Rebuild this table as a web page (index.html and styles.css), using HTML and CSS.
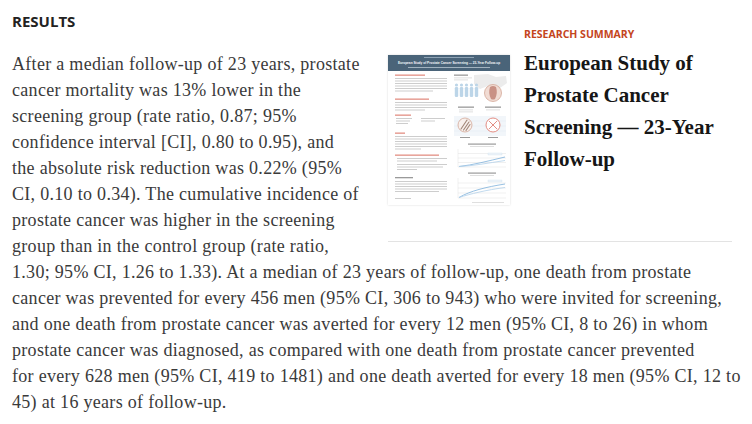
FILE: index.html
```html
<!DOCTYPE html>
<html lang="en">
<head>
<meta charset="utf-8">
<title>Results</title>
<link rel="stylesheet" href="styles.css">
</head>
<body>
<div class="page">
  <aside class="summary">
    <div class="thumb">
      <svg viewBox="0 0 122 150" width="122" height="150" aria-hidden="true">
        <rect width="122" height="150" fill="#fff"/>
        <rect x="0" y="0" width="122" height="16" fill="#4a6479"/>
        <rect x="36" y="2.2" width="50" height="0.8" fill="#9fb3c3"/>
        <text x="61" y="9" font-size="3.2" fill="#f4f7fa" text-anchor="middle" font-family="Liberation Sans" font-weight="700">European Study of Prostate Cancer Screening — 23-Year Follow-up</text>
        <rect x="20" y="12" width="82" height="0.8" fill="#b8c7d3"/>
        <g fill="#e38f84">
          <rect x="7" y="19.5" width="30" height="1.3"/>
          <rect x="7" y="43.5" width="34" height="1.3"/>
          <rect x="7" y="59.5" width="16" height="1.3"/>
          <rect x="7" y="77.5" width="10" height="1.3"/>
          <rect x="7" y="99.5" width="44" height="1.3"/>
        </g>
        <g fill="#cdcdcd">
          <rect x="7" y="23" width="52" height="1"/>
          <rect x="7" y="25.5" width="52" height="1"/>
          <rect x="7" y="28" width="52" height="1"/>
          <rect x="7" y="30.5" width="52" height="1"/>
          <rect x="7" y="33" width="52" height="1"/>
          <rect x="7" y="35.5" width="38" height="1"/>
          <rect x="7" y="47" width="52" height="1"/>
          <rect x="7" y="49.5" width="52" height="1"/>
          <rect x="7" y="52" width="52" height="1"/>
          <rect x="7" y="54.5" width="30" height="1"/>
          <rect x="8" y="63" width="16" height="1"/>
          <rect x="8" y="65.5" width="14" height="1"/>
          <rect x="8" y="68" width="12" height="1"/>
          <rect x="33" y="63" width="24" height="1"/>
          <rect x="33" y="65.5" width="14" height="1"/>
          <rect x="7" y="81" width="52" height="1"/>
          <rect x="7" y="83.5" width="52" height="1"/>
          <rect x="7" y="86" width="52" height="1"/>
          <rect x="7" y="88.5" width="52" height="1"/>
          <rect x="7" y="91" width="52" height="1"/>
          <rect x="7" y="93.5" width="26" height="1"/>
          <rect x="9" y="103" width="50" height="1"/>
          <rect x="9" y="105.5" width="40" height="1"/>
          <rect x="9" y="109" width="50" height="1"/>
          <rect x="9" y="111.5" width="46" height="1"/>
          <rect x="9" y="114" width="20" height="1"/>
          <rect x="7" y="126" width="52" height="1"/>
          <rect x="7" y="128.5" width="52" height="1"/>
          <rect x="7" y="131" width="52" height="1"/>
          <rect x="7" y="133.5" width="52" height="1"/>
          <rect x="7" y="136" width="44" height="1"/>
          <rect x="7" y="143" width="16" height="1"/>
        </g>
        <rect x="7" y="122" width="18" height="1.3" fill="#9a9a9a"/>
        <g fill="#9a9a9a">
          <rect x="66" y="19.5" width="14" height="1.3"/>
          <rect x="70" y="51.5" width="16" height="1.3"/>
          <rect x="97" y="51.5" width="16" height="1.3"/>
          <rect x="72" y="82" width="10" height="1"/>
          <rect x="100" y="82" width="10" height="1"/>
          <rect x="80" y="88.5" width="28" height="1.2"/>
          <rect x="80" y="117.5" width="28" height="1.2"/>
        </g>
        <g fill="#d8d8d8">
          <rect x="66" y="22.5" width="18" height="0.8"/>
          <rect x="66" y="24.5" width="14" height="0.8"/>
          <rect x="71" y="54.5" width="14" height="0.8"/>
          <rect x="71" y="56.5" width="14" height="0.8"/>
          <rect x="98" y="54.5" width="14" height="0.8"/>
          <rect x="82" y="91" width="24" height="0.8"/>
          <rect x="82" y="120" width="24" height="0.8"/>
          <rect x="84" y="147" width="32" height="0.8"/>
        </g>
        <path d="M86 20 L100 19 L108 22 L118 21 L119 28 L112 33 L100 31 L92 34 L86 29 Z" fill="#ececec"/>
        <g fill="#bcd5e8">
          <circle cx="68.5" cy="30" r="1.6"/><rect x="66.8" y="32" width="3.4" height="10" rx="1.2"/>
          <circle cx="73.5" cy="30" r="1.6"/><rect x="71.8" y="32" width="3.4" height="10" rx="1.2"/>
          <circle cx="78.5" cy="30" r="1.6"/><rect x="76.8" y="32" width="3.4" height="10" rx="1.2"/>
          <circle cx="83.5" cy="30" r="1.6"/><rect x="81.8" y="32" width="3.4" height="10" rx="1.2"/>
          <circle cx="88.5" cy="30" r="1.6"/><rect x="86.8" y="32" width="3.4" height="10" rx="1.2"/>
        </g>
        <circle cx="105" cy="38" r="8.5" fill="#f1dcd4" stroke="#d3a797" stroke-width="0.8"/>
        <path d="M102 32 Q105 30 108 32 Q110 38 107 44 Q105 45 103 44 Q100 38 102 32 Z" fill="#c99185"/>
        <rect x="66" y="61" width="52" height="20" fill="#f2f6fa"/>
        <g stroke="#e2eaf1" stroke-width="0.5">
          <line x1="66" y1="66" x2="118" y2="66"/>
          <line x1="66" y1="71" x2="118" y2="71"/>
          <line x1="66" y1="76" x2="118" y2="76"/>
        </g>
        <circle cx="77" cy="70" r="7" fill="#f8f0ec" stroke="#d3a797" stroke-width="0.8"/>
        <g stroke="#a08477" stroke-width="1.1" stroke-linecap="round">
          <line x1="73" y1="74" x2="79" y2="65"/>
          <line x1="75.5" y1="75" x2="81" y2="67"/>
          <line x1="78" y1="75.5" x2="82" y2="69.5"/>
        </g>
        <circle cx="105" cy="70" r="7" fill="#fff" stroke="#e08075" stroke-width="0.9"/>
        <g stroke="#e08075" stroke-width="0.9">
          <line x1="101" y1="66" x2="109" y2="74"/>
          <line x1="109" y1="66" x2="101" y2="74"/>
        </g>
        <g stroke="#e0e0e0" stroke-width="0.5" fill="none">
          <path d="M70 94 V112 H118"/>
          <line x1="70" y1="98.5" x2="118" y2="98.5"/>
          <line x1="70" y1="103" x2="118" y2="103"/>
          <line x1="70" y1="107.5" x2="118" y2="107.5"/>
          <path d="M70 123 V143 H118"/>
          <line x1="70" y1="128" x2="118" y2="128"/>
          <line x1="70" y1="133" x2="118" y2="133"/>
          <line x1="70" y1="138" x2="118" y2="138"/>
        </g>
        <path d="M71 111.5 C85 110 100 106 117 102" fill="none" stroke="#7cb0da" stroke-width="0.8"/>
        <path d="M71 111.5 C85 111 100 108 117 105.5" fill="none" stroke="#b3d1ea" stroke-width="0.8"/>
        <rect x="100" y="98" width="14" height="2" fill="#eef4fa" stroke="#c6dbec" stroke-width="0.3"/>
        <path d="M71 142.5 C82 136 98 132 117 129" fill="none" stroke="#7cb0da" stroke-width="0.8"/>
        <path d="M71 142.5 C82 139 98 135 117 132.5" fill="none" stroke="#b3d1ea" stroke-width="0.8"/>
        <rect x="100" y="125" width="14" height="2" fill="#eef4fa" stroke="#c6dbec" stroke-width="0.3"/>
      </svg>
    </div>
    <div class="info">
      <div class="label">RESEARCH SUMMARY</div>
      <h3 class="title">European Study of Prostate Cancer Screening — 23-Year Follow-up</h3>
    </div>
  </aside>
  <h2 class="heading">RESULTS</h2>
  <p class="body-text">After a median follow-up of 23 years, prostate<br>
cancer mortality was 13% lower in the<br>
screening group (rate ratio, 0.87; 95%<br>
confidence interval [CI], 0.80 to 0.95), and<br>
the absolute risk reduction was 0.22% (95%<br>
CI, 0.10 to 0.34). The cumulative incidence of<br>
prostate cancer was higher in the screening<br>
group than in the control group (rate ratio,<br>
1.30; 95% CI, 1.26 to 1.33). At a median of 23 years of follow-up, one death from prostate<br>
cancer was prevented for every 456 men (95% CI, 306 to 943) who were invited for screening,<br>
and one death from prostate cancer was averted for every 12 men (95% CI, 8 to 26) in whom<br>
prostate cancer was diagnosed, as compared with one death from prostate cancer prevented<br>
for every 628 men (95% CI, 419 to 1481) and one death averted for every 18 men (95% CI, 12 to<br>
45) at 16 years of follow-up.</p>
</div>
</body>
</html>
```

FILE: styles.css
```css
* {
  box-sizing: border-box;
}

body {
  margin: 0;
  background: #ffffff;
}

.page {
  width: 752px;
  padding: 12px 4px 0 12px;
}

.summary {
  float: right;
  width: 344px;
  margin: 14px 16px 0 14px;
  padding-bottom: 36px;
  border-bottom: 1px solid #e3e3e3;
  display: flex;
  gap: 14px;
}

.thumb {
  flex: none;
  width: 122px;
  height: 150px;
  margin-top: 29px;
  box-shadow: 0 0 2px rgba(0, 0, 0, 0.15);
}

.thumb svg {
  display: block;
}

.info {
  flex: 1;
  min-width: 0;
}

.label {
  font-family: "Open Sans", "Liberation Sans", sans-serif;
  font-weight: 700;
  font-size: 10.5px;
  line-height: 16px;
  color: #c4451d;
}

.title {
  margin: 5px 0 0;
  font-family: "Liberation Serif", serif;
  font-weight: 700;
  font-size: 21px;
  line-height: 32px;
  color: #161616;
}

.heading {
  margin: 0 0 21px;
  font-family: "Open Sans", "Liberation Sans", sans-serif;
  font-weight: 700;
  font-size: 15px;
  line-height: 18px;
  color: #222222;
}

.body-text {
  margin: 0;
  font-family: "Liberation Serif", serif;
  font-size: 18px;
  line-height: 26px;
  letter-spacing: 0.3px;
  color: #3a3a3a;
}
```
